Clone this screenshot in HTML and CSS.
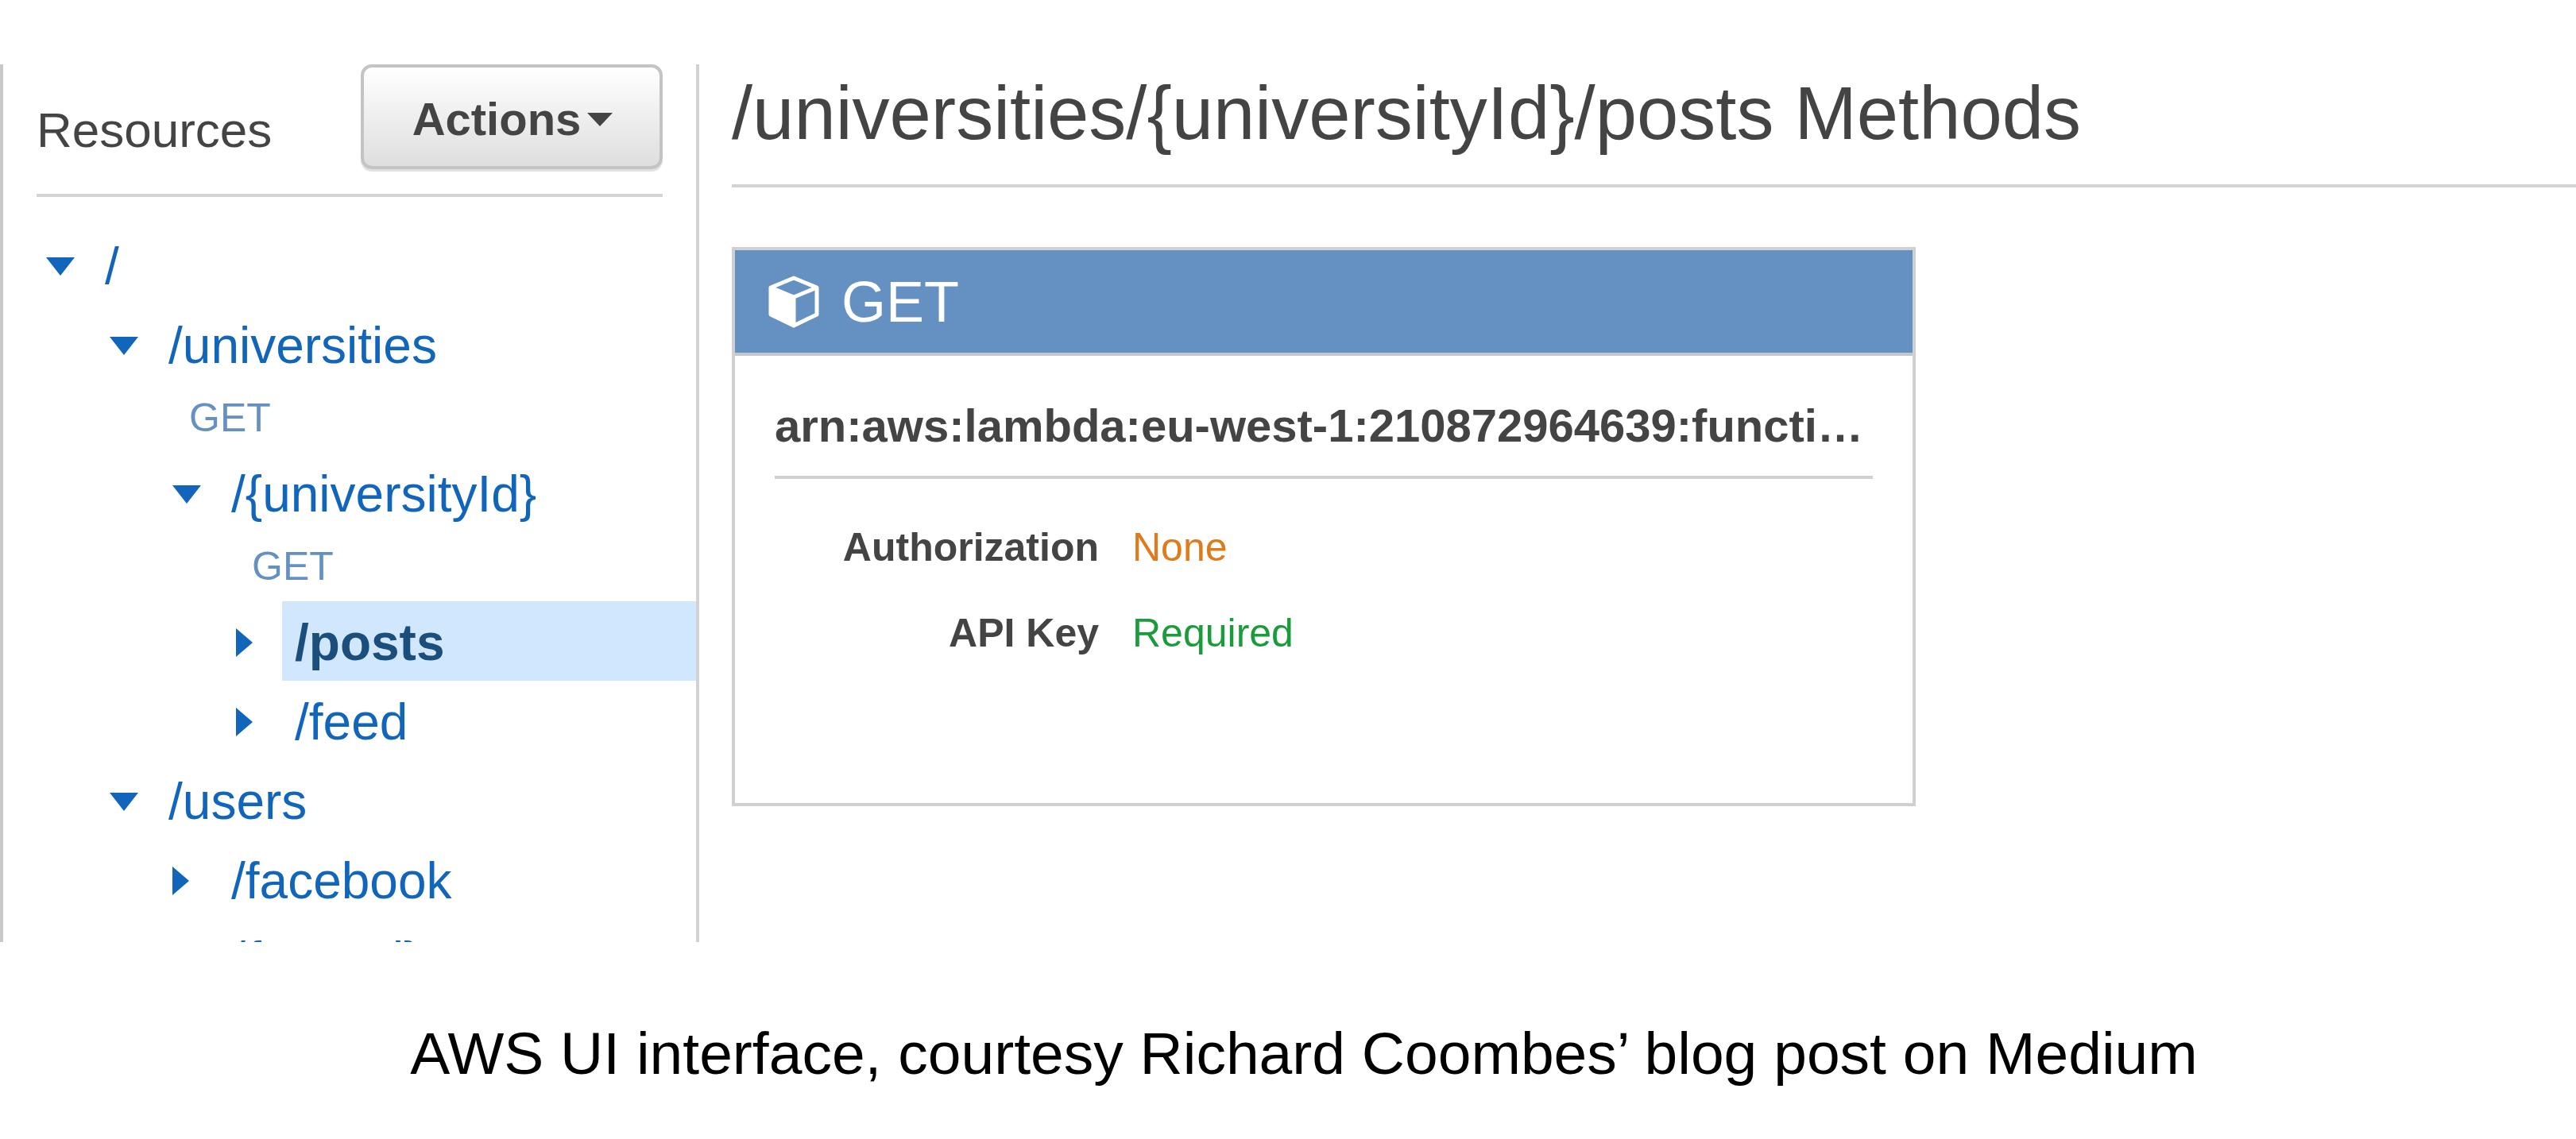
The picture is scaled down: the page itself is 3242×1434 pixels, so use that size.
FILE: index.html
```html
<!DOCTYPE html>
<html lang="en">
<head>
<meta charset="utf-8">
<title>API Gateway resources</title>
<link rel="stylesheet" href="styles.css">
</head>
<body>
<figure class="figure">
  <div class="console">
    <nav class="sidebar" aria-label="Resources">
      <header class="sidebar-head">
        <h2 class="sidebar-title">Resources</h2>
        <button class="actions" type="button">Actions<svg class="actions-caret" viewBox="0 0 32 17" aria-hidden="true"><path d="M0 0h32L16 17z"/></svg></button>
      </header>
      <ul class="tree">
        <li class="row level-0"><svg class="caret" viewBox="0 0 36 40" aria-hidden="true"><path d="M0 11h36L18 34z"/></svg><a class="path" href="#root">/</a></li>
        <li class="row level-1"><svg class="caret" viewBox="0 0 36 40" aria-hidden="true"><path d="M0 11h36L18 34z"/></svg><a class="path" href="#universities">/universities</a></li>
        <li class="row method level-1"><a class="verb" href="#universities-get">GET</a></li>
        <li class="row level-2"><svg class="caret" viewBox="0 0 36 40" aria-hidden="true"><path d="M0 11h36L18 34z"/></svg><a class="path" href="#university">/{universityId}</a></li>
        <li class="row method level-2"><a class="verb" href="#university-get">GET</a></li>
        <li class="row level-3"><svg class="caret" viewBox="0 0 36 40" aria-hidden="true"><path d="M0 4l21 18L0 40z"/></svg><a class="path selected" href="#posts" aria-current="true">/posts</a></li>
        <li class="row level-3"><svg class="caret" viewBox="0 0 36 40" aria-hidden="true"><path d="M0 4l21 18L0 40z"/></svg><a class="path" href="#feed">/feed</a></li>
        <li class="row level-1"><svg class="caret" viewBox="0 0 36 40" aria-hidden="true"><path d="M0 11h36L18 34z"/></svg><a class="path" href="#users">/users</a></li>
        <li class="row level-2"><svg class="caret" viewBox="0 0 36 40" aria-hidden="true"><path d="M0 4l21 18L0 40z"/></svg><a class="path" href="#facebook">/facebook</a></li>
        <li class="row level-2"><svg class="caret" viewBox="0 0 36 40" aria-hidden="true"><path d="M0 11h36L18 34z"/></svg><a class="path" href="#user">/{userId}</a></li>
      </ul>
    </nav>
    <main class="content">
      <h1 class="content-title">/universities/{universityId}/posts Methods</h1>
      <section class="card">
        <h2 class="card-head">
          <svg class="cube" viewBox="0 0 64 66" aria-hidden="true"><path class="cube-edge" d="M32 3L61 15V49L32 63L3 49V15zM3 15L32 27L61 15M32 27V63"/><path class="cube-face" d="M3 15L32 27V63L3 49z"/></svg>
          GET
        </h2>
        <div class="card-body">
          <p class="arn">arn:aws:lambda:eu-west-1:210872964639:functi…</p>
          <dl class="facts">
            <dt>Authorization</dt><dd class="none">None</dd>
            <dt>API Key</dt><dd class="required">Required</dd>
          </dl>
        </div>
      </section>
    </main>
  </div>
  <figcaption class="caption">AWS UI interface, courtesy Richard Coombes’ blog post on Medium</figcaption>
</figure>
</body>
</html>
```
FILE: styles.css
```css
* { box-sizing: border-box; }

body {
  margin: 0;
  background: #fff;
  color: #444;
  font-family: "Liberation Sans", Arial, Helvetica, sans-serif;
}

h1, h2, p, ul, dl, dd, figure { margin: 0; padding: 0; }
h1, h2 { font-weight: 400; }
a { text-decoration: none; }

.figure { padding-top: 81px; }

/* The console is a fixed-height pane; the tree runs on below its edge. */
.console {
  display: flex;
  height: 1105px;
  overflow: hidden;
}

.sidebar {
  flex: none;
  width: 880px;
  border-left: 4px solid #c8c8c8;
  border-right: 4px solid #d2d2d2;
}

.sidebar-head {
  display: flex;
  justify-content: space-between;
  align-items: flex-start;
  height: 167px;
  margin: 0 42px;
  border-bottom: 4px solid #d4d4d4;
}

.sidebar-title {
  padding-top: 48px;
  font-size: 62px;
  line-height: 70px;
}

.actions {
  display: flex;
  align-items: center;
  justify-content: center;
  gap: 8px;
  width: 380px;
  height: 132px;
  padding: 6px 0 0 2px;
  border: 4px solid #c4c4c4;
  border-radius: 14px;
  background: linear-gradient(#fff, #dedede);
  box-shadow: 0 3px 1px #e0e0e0;
  color: #444;
  font: bold 58px/64px "Liberation Sans", Arial, Helvetica, sans-serif;
}

.actions-caret { width: 32px; height: 17px; fill: #444; }

.tree { list-style: none; padding-top: 35px; }

.row { display: flex; align-items: center; height: 100px; }
.method { height: 87px; }

.level-0 { padding-left: 54px; }
.level-1 { padding-left: 134px; }
.level-2 { padding-left: 213px; }
.level-3 { padding-left: 293px; }

.caret { flex: none; width: 36px; height: 40px; fill: #1166bb; }

.path {
  flex: 1;
  margin-left: 22px;
  padding: 4px 0 0 16px;
  color: #1166bb;
  font-size: 64px;
  line-height: 96px;
}

.selected { background: #d0e7fe; color: #1c4e7c; font-weight: 700; }

.verb {
  margin-left: 100px;
  color: #6491c1;
  font-size: 50px;
  line-height: 87px;
}

.content { flex: 1; min-width: 0; padding-left: 41px; }

.content-title {
  height: 155px;
  padding-top: 12px;
  border-bottom: 4px solid #d4d4d4;
  font-size: 94px;
  line-height: 100px;
  white-space: nowrap;
}

.card {
  width: 1490px;
  height: 704px;
  margin-top: 75px;
  border: 4px solid #d0d0d0;
}

.card-head {
  display: flex;
  align-items: center;
  gap: 28px;
  height: 133px;
  padding-left: 42px;
  border-bottom: 4px solid #c3c7cb;
  background: #6491c1;
  color: #fff;
  font-size: 72px;
  line-height: 88px;
}

.cube { width: 64px; height: 66px; }
.cube-edge { fill: none; stroke: #fff; stroke-width: 5; stroke-linejoin: round; }
.cube-face { fill: #fff; }

.card-body { padding: 48px 50px; }

.arn {
  height: 107px;
  overflow: hidden;
  border-bottom: 4px solid #d0d0d0;
  font-size: 58px;
  font-weight: 700;
  line-height: 80px;
  text-overflow: ellipsis;
  white-space: nowrap;
}

.facts {
  display: grid;
  grid-template-columns: 408px 1fr;
  column-gap: 42px;
  padding-top: 32px;
  font-size: 50px;
  line-height: 108px;
}

.facts dt { font-weight: 700; text-align: right; }
.none { color: #e07b1c; }
.required { color: #1a9c3a; }

.caption {
  padding: 94px 0 0 40px;
  color: #000;
  font-size: 75px;
  line-height: 92px;
  text-align: center;
}
```
